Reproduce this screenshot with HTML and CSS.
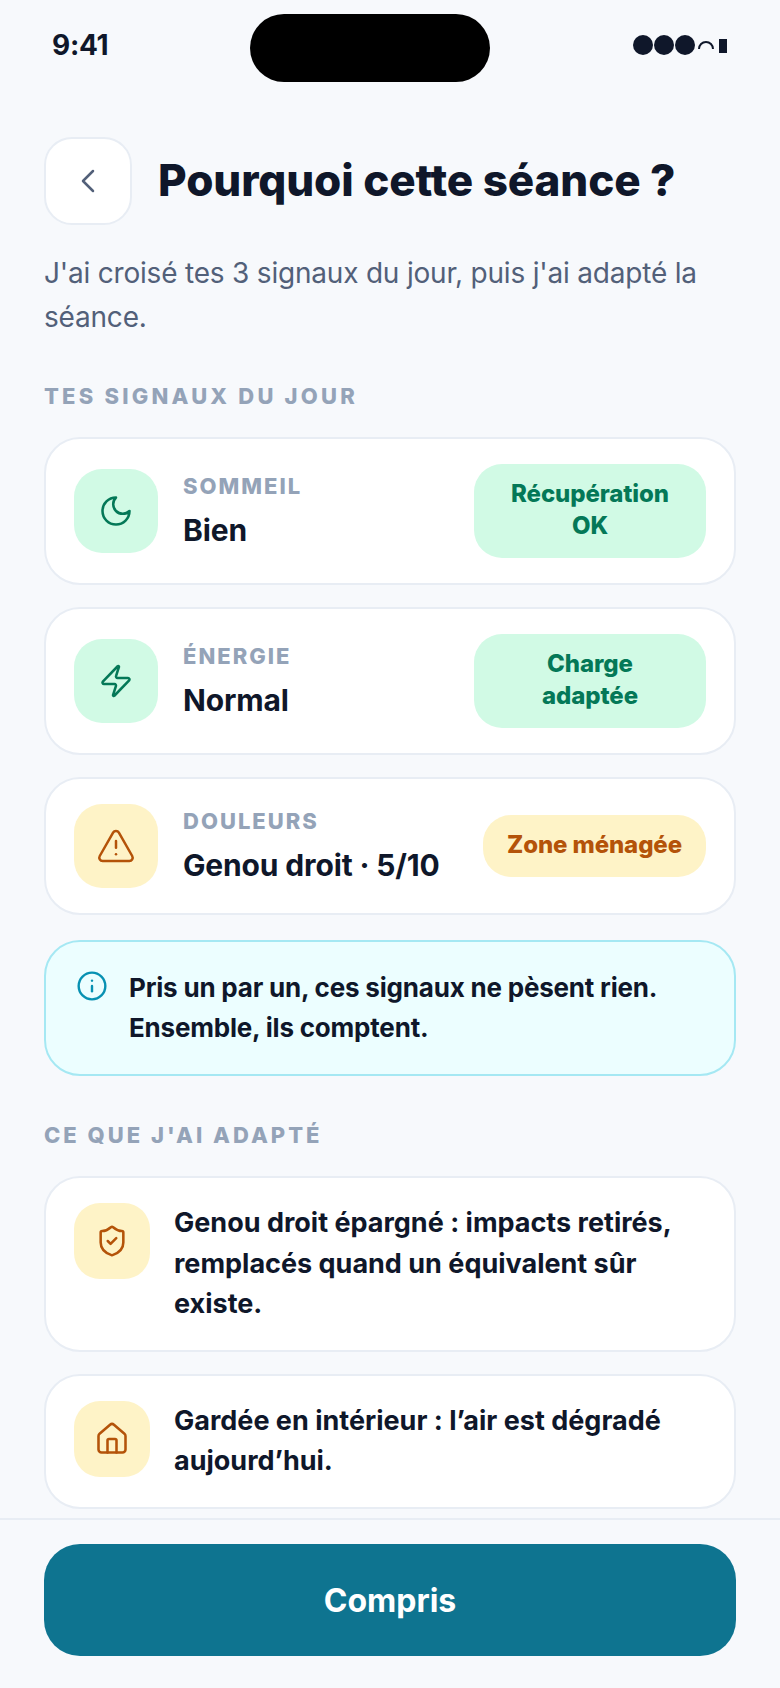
FILE: index.html
```html
<!DOCTYPE html>
<html lang="fr">
<head>
    <meta charset="UTF-8">
    <meta name="viewport" content="width=device-width, initial-scale=1.0">
    <title>Pourquoi cette séance ?</title>
    <link rel="stylesheet" href="styles.css">
</head>
<body>
    <div class="screen">
        <div class="notch"></div>

        <div class="status-bar">
            <span class="status-time">9:41</span>
            <div class="status-icons">
                <span class="status-dot"></span>
                <span class="status-dot"></span>
                <span class="status-dot"></span>
                <svg class="status-wifi" viewBox="0 0 16 9"><path d="M1 8a7 7 0 0 1 14 0"/></svg>
                <span class="status-battery"></span>
            </div>
        </div>

        <main class="content">
            <header class="page-header">
                <div class="back-button">
                    <svg class="icon icon-back" viewBox="0 0 24 24"><path d="m15 18-6-6 6-6"/></svg>
                </div>
                <h1>Pourquoi cette séance ?</h1>
            </header>

            <p class="intro">J'ai croisé tes 3 signaux du jour, puis j'ai adapté la séance.</p>

            <h2 class="section-label">TES SIGNAUX DU JOUR</h2>

            <div class="card-list">
                <div class="card signal-card">
                    <div class="icon-box green">
                        <svg class="icon" viewBox="0 0 24 24"><path d="M12 3a6 6 0 0 0 9 9 9 9 0 1 1-9-9Z"/></svg>
                    </div>
                    <div class="signal-text">
                        <div class="signal-name">SOMMEIL</div>
                        <div class="signal-value">Bien</div>
                    </div>
                    <div class="badge badge-wide green">Récupération<br>OK</div>
                </div>

                <div class="card signal-card">
                    <div class="icon-box green">
                        <svg class="icon" viewBox="0 0 24 24"><path d="M4 14a1 1 0 0 1-.78-1.63l9.9-10.2a.5.5 0 0 1 .86.46l-1.92 6.02A1 1 0 0 0 13 10h7a1 1 0 0 1 .78 1.63l-9.9 10.2a.5.5 0 0 1-.86-.46l1.92-6.02A1 1 0 0 0 11 14z"/></svg>
                    </div>
                    <div class="signal-text">
                        <div class="signal-name">ÉNERGIE</div>
                        <div class="signal-value">Normal</div>
                    </div>
                    <div class="badge badge-wide green">Charge<br>adaptée</div>
                </div>

                <div class="card signal-card">
                    <div class="icon-box amber">
                        <svg class="icon icon-alert" viewBox="0 0 24 24"><path d="m21.73 18-8-14a2 2 0 0 0-3.48 0l-8 14A2 2 0 0 0 4 21h16a2 2 0 0 0 1.73-3"/><path d="M12 9v4"/><path d="M12 17h.01"/></svg>
                    </div>
                    <div class="signal-text">
                        <div class="signal-name">DOULEURS</div>
                        <div class="signal-value">Genou droit · 5/10</div>
                    </div>
                    <div class="badge amber">Zone ménagée</div>
                </div>

                <div class="callout">
                    <svg class="icon icon-info" viewBox="0 0 24 24"><circle cx="12" cy="12" r="10"/><path d="M12 16v-4"/><path d="M12 8h.01"/></svg>
                    <p>Pris un par un, ces signaux ne pèsent rien. Ensemble, ils comptent.</p>
                </div>
            </div>

            <h2 class="section-label section-label-second">CE QUE J'AI ADAPTÉ</h2>

            <div class="card-list">
                <div class="card change-card">
                    <div class="icon-box icon-box-small amber">
                        <svg class="icon icon-shield" viewBox="0 0 24 24"><path d="M20 13c0 5-3.5 7.5-7.66 8.95a1 1 0 0 1-.67-.01C7.5 20.5 4 18 4 13V6a1 1 0 0 1 1-1c2 0 4.5-1.2 6.24-2.72a1.17 1.17 0 0 1 1.52 0C14.51 3.81 17 5 19 5a1 1 0 0 1 1 1z"/><path d="m9 12 2 2 4-4"/></svg>
                    </div>
                    <p>Genou droit épargné : impacts retirés, remplacés quand un équivalent sûr existe.</p>
                </div>

                <div class="card change-card">
                    <div class="icon-box icon-box-small amber">
                        <svg class="icon" viewBox="0 0 24 24"><path d="M15 21v-8a1 1 0 0 0-1-1h-4a1 1 0 0 0-1 1v8"/><path d="M3 10a2 2 0 0 1 .709-1.528l7-5.999a2 2 0 0 1 2.582 0l7 5.999A2 2 0 0 1 21 10v9a2 2 0 0 1-2 2H5a2 2 0 0 1-2-2z"/></svg>
                    </div>
                    <p>Gardée en intérieur : l’air est dégradé aujourd’hui.</p>
                </div>
            </div>
        </main>

        <footer class="footer">
            <button class="primary-button">Compris</button>
        </footer>
    </div>
</body>
</html>
```

FILE: styles.css
```css
* {
    box-sizing: border-box;
}
body {
    margin: 0;
    font-family: Inter, "Noto Sans", sans-serif;
    background-color: #f7f9fc;
    color: #0f172a;
}
h1, h2, p {
    margin: 0;
}
.screen {
    position: relative;
    display: flex;
    flex-direction: column;
    width: 780px;
    height: 1688px;
    overflow: hidden;
}
.notch {
    position: absolute;
    top: 14px;
    left: 250px;
    width: 240px;
    height: 68px;
    border-radius: 34px;
    background-color: #000;
}
.status-bar {
    flex: none;
    display: flex;
    justify-content: space-between;
    align-items: center;
    height: 90px;
    padding: 0 53px 0 52px;
}
.status-time {
    font-size: 28px;
    font-weight: 700;
    letter-spacing: -0.3px;
}
.status-icons {
    display: flex;
    align-items: center;
    gap: 1px;
}
.status-dot {
    width: 20px;
    height: 20px;
    border-radius: 50%;
    background-color: #0f172a;
}
.status-wifi {
    width: 16px;
    height: 9px;
    margin: 0 4px 0 2px;
    fill: none;
    stroke: #0f172a;
    stroke-width: 2;
}
.status-battery {
    width: 8px;
    height: 14px;
    margin-top: 2px;
    background-color: #0f172a;
}
.content {
    flex: 1;
    min-height: 0;
    padding: 47px 44px 0;
    overflow: hidden;
}
.page-header {
    display: flex;
    align-items: center;
    gap: 26px;
}
.back-button {
    flex: none;
    display: flex;
    justify-content: center;
    align-items: center;
    width: 88px;
    height: 88px;
    border: 2px solid #e8edf4;
    border-radius: 28px;
    background-color: #fff;
}
h1 {
    margin-top: -3px;
    font-size: 44px;
    font-weight: 800;
    letter-spacing: -0.1px;
}
.intro {
    margin-top: 26px;
    font-size: 28px;
    line-height: 44px;
    letter-spacing: -0.2px;
    color: #526079;
}
.section-label {
    margin-top: 43px;
    font-size: 22px;
    line-height: 28px;
    font-weight: 800;
    letter-spacing: 3.2px;
    color: #94a3b8;
}
.section-label-second {
    margin-top: 45px;
    letter-spacing: 3px;
}
.card-list {
    display: flex;
    flex-direction: column;
    gap: 22px;
    margin-top: 27px;
}
.card {
    display: flex;
    border: 2px solid #e8edf4;
    border-radius: 36px;
    padding: 25px 28px;
    background-color: #fff;
}
.signal-card {
    align-items: center;
}
.icon {
    display: block;
    width: 36px;
    height: 36px;
    fill: none;
    stroke: currentColor;
    stroke-width: 1.7;
    stroke-linecap: round;
    stroke-linejoin: round;
}
.icon-back {
    width: 40px;
    height: 40px;
    stroke-width: 1.5;
    color: #526079;
}
.icon-alert {
    width: 40px;
    height: 40px;
    stroke-width: 1.5;
}
.icon-box {
    flex: none;
    display: flex;
    justify-content: center;
    align-items: center;
    width: 84px;
    height: 84px;
    border-radius: 28px;
}
.icon-box-small {
    width: 76px;
    height: 76px;
    border-radius: 26px;
}
.icon-shield {
    width: 34px;
    height: 34px;
    stroke-width: 1.8;
}
.green {
    background-color: #d1fae5;
    color: #047857;
}
.amber {
    background-color: #fef3c7;
    color: #b45309;
}
.signal-text {
    flex: 1;
    min-width: 0;
    margin-left: 25px;
}
.signal-name {
    font-size: 22px;
    line-height: 28px;
    font-weight: 800;
    letter-spacing: 2px;
    color: #94a3b8;
}
.signal-value {
    margin-top: 10px;
    font-size: 30px;
    line-height: 40px;
    font-weight: 700;
    letter-spacing: -0.15px;
}
.badge {
    flex: none;
    padding: 14px 24px 16px;
    border-radius: 28px;
    font-size: 24px;
    line-height: 32px;
    font-weight: 800;
    letter-spacing: -0.1px;
    text-align: center;
}
.badge-wide {
    width: 232px;
}
.callout {
    display: flex;
    gap: 21px;
    margin-top: 3px;
    padding: 26px 30px;
    border: 2px solid #a5e8f3;
    border-radius: 36px;
    background-color: #ecfeff;
}
.callout p {
    font-size: 26px;
    line-height: 40px;
    font-weight: 700;
    letter-spacing: -0.2px;
}
.change-card p {
    font-size: 27px;
    line-height: 40.5px;
    font-weight: 700;
}
.icon-info {
    flex: none;
    width: 32px;
    height: 32px;
    margin-top: 2px;
    color: #0891b2;
    stroke-width: 1.8;
}
.change-card {
    gap: 24px;
}
.footer {
    flex: none;
    height: 170px;
    padding: 24px 44px 0;
    border-top: 2px solid #e8edf4;
}
.primary-button {
    display: block;
    width: 100%;
    height: 112px;
    border: none;
    border-radius: 36px;
    background-color: #0e7490;
    color: #fff;
    font-family: inherit;
    font-size: 32px;
    font-weight: 700;
}
```
